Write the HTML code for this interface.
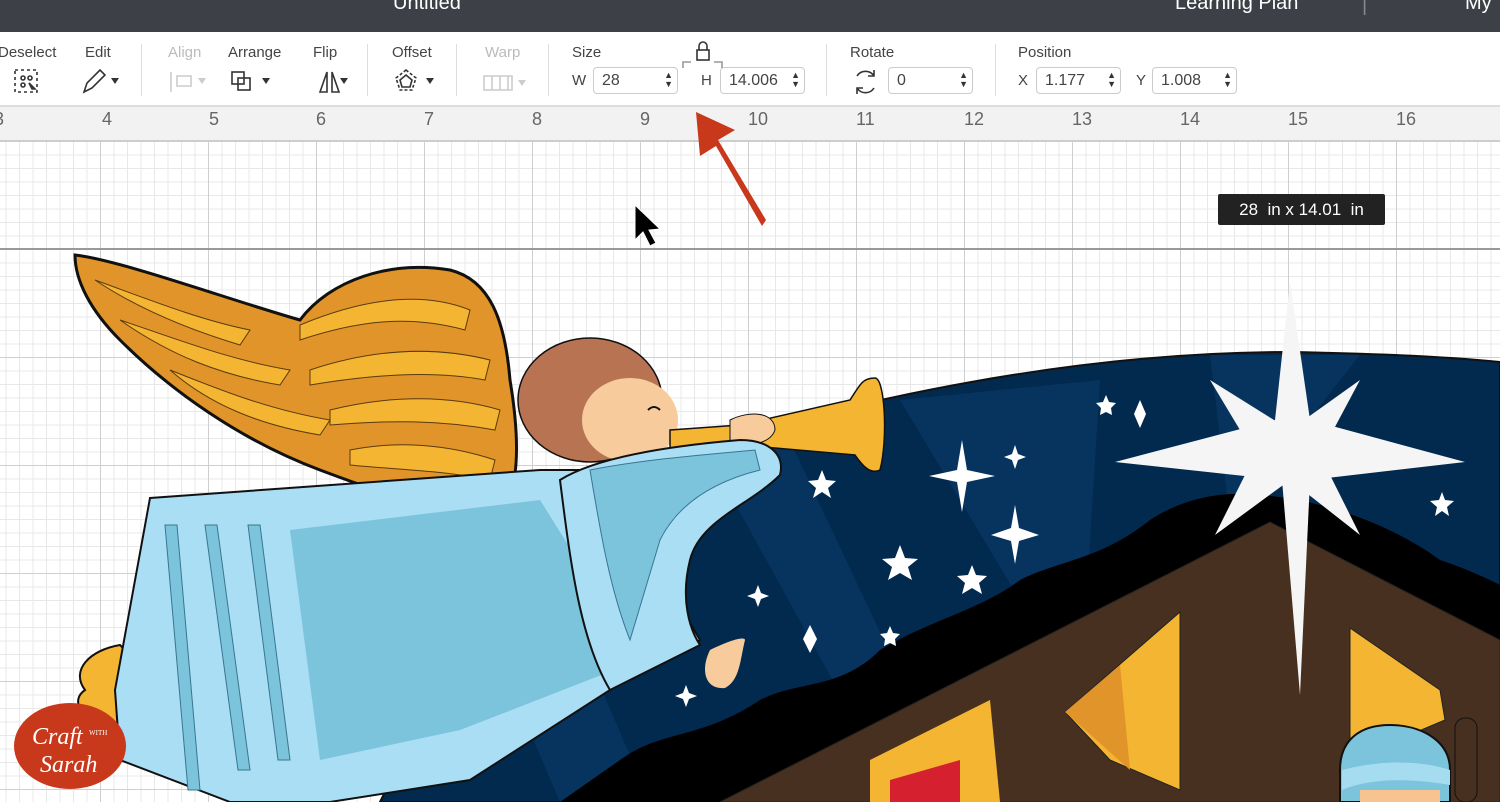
<!DOCTYPE html>
<html><head><meta charset="utf-8"><style>
*{margin:0;padding:0;box-sizing:border-box}
body{width:1500px;height:802px;overflow:hidden;font-family:"Liberation Sans",sans-serif;position:relative;background:#fff}
#top{position:absolute;left:0;top:0;width:1500px;height:32px;background:#3d4047;color:#fff;font-size:20px}
#tb{position:absolute;left:0;top:32px;width:1500px;height:75px;background:#fff;border-bottom:2px solid #ddd;color:#444;font-size:15px}
.l{position:absolute;top:12px}
.g{color:#bbb}
.sep{position:absolute;top:12px;width:1px;height:52px;background:#ddd}
.in{position:absolute;top:35px;height:27px;border:1px solid #ccc;border-radius:4px;font-size:16px;padding:4px 8px;background:#fff}
.sp{position:absolute;right:4px;top:3px;font-size:9px;line-height:9px;color:#333}
#ruler{position:absolute;left:0;top:107px;width:1500px;height:34px;background:#f2f2f2;border-bottom:1px solid #ccc}
#ruler span{position:absolute;top:2px;font-size:18px;color:#666}
#grid{position:absolute;left:0;top:141px;width:1500px;height:661px;
background-image:linear-gradient(90deg,#cfcfcf 1px,transparent 1px),linear-gradient(#cfcfcf 1px,transparent 1px),linear-gradient(90deg,#e8e8e8 1px,transparent 1px),linear-gradient(#e8e8e8 1px,transparent 1px);
background-size:108px 108px,108px 108px,13.5px 13.5px,13.5px 13.5px;background-position:100px 0,0 0,100px 0,0 0}
</style></head><body>
<div id="top"><span style="position:absolute;left:393px;top:-8px">Untitled</span><span style="position:absolute;left:1175px;top:-8px">Learning Plan</span><span style="position:absolute;left:1362px;top:-6px;color:#888">|</span><span style="position:absolute;left:1465px;top:-8px">My</span></div>
<div id="tb">
<span class="l" style="left:-2px">Deselect</span><span class="l" style="left:85px">Edit</span>
<div class="sep" style="left:141px"></div>
<span class="l g" style="left:168px">Align</span><span class="l" style="left:228px">Arrange</span><span class="l" style="left:313px">Flip</span>
<div class="sep" style="left:367px"></div>
<span class="l" style="left:392px">Offset</span>
<div class="sep" style="left:456px"></div>
<span class="l g" style="left:485px">Warp</span>
<div class="sep" style="left:548px"></div>
<span class="l" style="left:572px">Size</span>
<span class="l" style="left:572px;top:40px">W</span><div class="in" style="left:593px;width:85px">28<span class="sp">▲<br>▼</span></div>
<span class="l" style="left:701px;top:40px">H</span><div class="in" style="left:720px;width:85px">14.006<span class="sp">▲<br>▼</span></div>
<div class="sep" style="left:826px"></div>
<span class="l" style="left:850px">Rotate</span><div class="in" style="left:888px;width:85px">0<span class="sp">▲<br>▼</span></div>
<div class="sep" style="left:995px"></div>
<span class="l" style="left:1018px">Position</span>
<span class="l" style="left:1018px;top:40px">X</span><div class="in" style="left:1036px;width:85px">1.177<span class="sp">▲<br>▼</span></div>
<span class="l" style="left:1136px;top:40px">Y</span><div class="in" style="left:1152px;width:85px">1.008<span class="sp">▲<br>▼</span></div>
<svg style="position:absolute;left:0;top:0" width="900" height="75" fill="none" stroke="#333" stroke-width="1.6">
<rect x="15" y="38" width="22" height="22" stroke-dasharray="3 3"/><circle cx="23" cy="46" r="2"/><circle cx="30" cy="46" r="2"/><circle cx="23" cy="53" r="2"/><path d="M29 51 l6 6 -3 0 z" fill="#333"/>
<path d="M84 60 l3-9 13-13 5 5 -13 13z"/><path d="M111 46h8l-4 6z" fill="#333" stroke="none"/>
<path d="M171 40v20M177 44h14v10h-14z" stroke="#ccc"/><path d="M198 46h8l-4 6z" fill="#ccc" stroke="none"/>
<rect x="232" y="40" width="12" height="12"/><rect x="238" y="46" width="12" height="12"/><path d="M262 46h8l-4 6z" fill="#333" stroke="none"/>
<path d="M320 60l7-20v20zM332 60v-20l7 20z"/><path d="M340 46h8l-4 6z" fill="#333" stroke="none"/>
<path d="M406 38l10 8-4 12h-12l-4-12z" stroke-dasharray="3 2"/><path d="M406 43l6 5-2 7h-8l-2-7z"/><path d="M426 46h8l-4 6z" fill="#333" stroke="none"/>
<path d="M484 44h28v14h-28zM492 44v14M500 44v14M508 44v14" stroke="#ccc"/><path d="M518 48h8l-4 6z" fill="#ccc" stroke="none"/>
<rect x="697" y="18" width="12" height="10"/><path d="M699 18v-4a4 4 0 0 1 8 0v4"/><path d="M683 36v-6h8M714 30h8v6" stroke="#999"/>
<path d="M857 44a10 10 0 0 1 17 0M874 56a10 10 0 0 1-17 0M874 38v6h-6M857 62v-6h6"/>
</svg>
</div>
<div id="ruler">
<span style="left:-6px">3</span><span style="left:102px">4</span><span style="left:209px">5</span><span style="left:316px">6</span><span style="left:424px">7</span><span style="left:532px">8</span><span style="left:640px">9</span><span style="left:748px">10</span><span style="left:856px">11</span><span style="left:964px">12</span><span style="left:1072px">13</span><span style="left:1180px">14</span><span style="left:1288px">15</span><span style="left:1396px">16</span>
</div>
<div id="grid"></div>
<div style="position:absolute;left:0;top:248px;width:1500px;height:2px;background:#999"></div>
<svg style="position:absolute;left:0;top:0" width="1500" height="802">
<path d="M380 802 C460 640 640 460 850 407 C1000 372 1150 352 1290 352 C1400 354 1460 358 1500 362 L1500 802Z" fill="#022a4f" stroke="#111" stroke-width="2"/>
<path d="M440 520 L560 802 H650 L520 500ZM700 440 L900 802 H960 L780 420ZM900 400 L1080 700 L1100 380Z M1210 355 L1230 520 L1360 355Z" fill="#06345f"/>
<path d="M560 802 L620 760 C660 730 700 740 760 700 C800 680 840 690 880 650 C930 620 980 610 1020 580 C1060 560 1100 560 1150 520 C1180 500 1220 490 1260 495 C1330 500 1400 530 1440 560 C1470 570 1490 580 1500 585 V802Z" fill="#000"/>
<path d="M720 802 L1270 522 L1500 640 V802Z" fill="#47301f" stroke="#222"/>
<path d="M1065 712 L1180 612 V790 L1110 760Z" fill="#f4b532" stroke="#222"/>
<path d="M1065 712 L1120 665 L1130 770 Z" fill="#e09429"/>
<path d="M1350 628 L1440 690 L1445 720 L1350 760Z" fill="#f4b532" stroke="#222"/>
<path d="M870 760 L990 700 L1000 802 H870Z" fill="#f4b532"/>
<path d="M890 780 L960 760 L960 802 H890Z" fill="#d4202f"/>
<rect x="1455" y="718" width="22" height="84" rx="10" fill="#47301f" stroke="#111"/>
<path d="M1340 802 V770 C1340 740 1360 725 1390 725 C1420 725 1450 740 1450 770 V802Z" fill="#7cc3dc" stroke="#111" stroke-width="2"/>
<path d="M1342 770 C1380 760 1420 760 1450 770 V785 C1410 778 1370 778 1342 790Z" fill="#a6dcf0"/>
<path d="M1360 802 V790 H1440 V802Z" fill="#f7c491"/>
<path d="M1290 282 L1310 420 L1465 462 L1310 480 L1300 695 L1282 480 L1115 462 L1275 420Z" fill="#f5f5f5"/>
<path d="M1210 380 L1290 430 L1360 380 L1320 455 L1360 535 L1290 480 L1215 535 L1255 455Z" fill="#f5f5f5"/>
<g fill="#fff">
<path d="M962 440 l5 30 28 6 -28 6 -5 30 -5-30 -28-6 28-6z"/>
<path d="M1015 505 l4 23 20 7 -20 6 -4 23 -4-23 -20-6 20-7z"/>
<path d="M1015 445 l3 9 8 3 -8 3 -3 9 -3-9 -8-3 8-3z"/>
<path d="M1140 400 l6 14 -6 14 -6-14z"/><path d="M1106 395 l3 7 7 1 -5 5 1 7 -6-3 -6 3 1-7 -5-5 7-1z"/>
<path d="M822 470 l4 10 10 1 -8 7 3 10 -9-6 -9 6 3-10 -8-7 10-1z"/>
<path d="M900 545 l5 13 13 1 -10 8 4 13 -12-7 -12 7 4-13 -10-8 13-1z"/>
<path d="M972 565 l4 10 11 1 -8 7 3 11 -10-6 -10 6 3-11 -8-7 11-1z"/>
<path d="M810 625 l7 14 -7 14 -7-14z"/><path d="M758 585 l3 8 8 3 -8 3 -3 8 -3-8 -8-3 8-3z"/>
<path d="M890 626 l3 7 7 1 -5 5 1 7 -6-3 -6 3 1-7 -5-5 7-1z"/>
<path d="M686 685 l3 8 8 3 -8 3 -3 8 -3-8 -8-3 8-3z"/><path d="M574 670 l3 7 8 1 -6 5 2 8 -7-4 -7 4 2-8 -6-5 8-1z"/>
<path d="M1442 492 l3 8 9 1 -7 6 2 9 -7-5 -7 5 2-9 -7-6 9-1z"/>
</g>
<path d="M75 255 C120 260 230 300 300 320 C330 280 390 260 450 270 C490 280 505 320 510 380 C520 440 520 490 500 515 C460 520 400 500 320 470 C240 440 170 390 120 340 C90 310 75 280 75 255Z" fill="#e09429" stroke="#111" stroke-width="3"/>
<g fill="#f4b532" stroke="#5a3a10" stroke-width="1">
<path d="M95 280 C150 300 200 320 250 330 L240 345 C190 330 140 310 95 280Z"/>
<path d="M120 320 C180 340 230 360 290 370 L280 385 C220 375 170 355 120 320Z"/>
<path d="M300 325 C360 300 420 290 470 310 L465 330 C410 315 360 320 300 340Z"/>
<path d="M310 370 C370 350 430 345 490 360 L485 380 C430 370 370 375 310 385Z"/>
<path d="M330 410 C390 395 450 395 500 410 L495 430 C440 420 390 420 330 425Z"/>
<path d="M350 450 C400 440 450 445 495 460 L490 480 C440 470 400 470 350 465Z"/>
<path d="M170 370 C220 390 270 410 330 420 L320 435 C260 425 210 405 170 370Z"/>
</g>
<path d="M120 645 C90 650 70 670 85 690 C70 700 80 720 110 725 L130 720 L125 650Z" fill="#f4b532" stroke="#111" stroke-width="2"/>
<path d="M150 498 L540 470 L600 470 L700 640 L610 690 L470 780 L330 802 L230 802 L120 760 L115 690 Z" fill="#a9def4" stroke="#111" stroke-width="2"/>
<path d="M290 530 L540 500 L640 660 L460 730 L320 760 Z" fill="#7cc3dc"/>
<g fill="#7cc3dc" stroke="#3a7590" stroke-width="1">
<path d="M165 525 h12 L200 790 h-12Z"/><path d="M205 525 h12 L250 770 h-12Z"/><path d="M248 525 h12 L290 760 h-12Z"/>
</g>
<ellipse cx="590" cy="400" rx="72" ry="62" fill="#b87353" stroke="#111" stroke-width="1.5"/>
<ellipse cx="630" cy="420" rx="48" ry="42" fill="#f8cb9d"/>
<path d="M648 410 q6-6 12 0" stroke="#111" stroke-width="2" fill="none"/>
<path d="M670 430 L740 425 L850 400 C860 385 862 378 875 378 C885 378 888 440 880 470 C870 475 862 465 855 455 L740 445 L670 450Z" fill="#f4b532" stroke="#111" stroke-width="1.5"/>
<path d="M730 420 C750 410 775 412 775 430 C770 445 745 448 730 440Z" fill="#f8cb9d" stroke="#111"/>
<path d="M710 650 C730 640 745 636 745 640 C740 660 740 680 725 688 C705 690 700 670 710 650Z" fill="#f8cb9d"/>
<path d="M560 480 C600 455 680 445 740 440 C770 440 785 455 780 475 C750 505 700 520 690 560 C680 600 690 630 700 645 L610 690 C580 640 570 560 560 480Z" fill="#a9def4" stroke="#111" stroke-width="2"/>
<path d="M590 470 C640 460 700 455 755 450 L760 470 C720 480 680 500 660 540 L630 640 C610 590 600 530 590 470Z" fill="#7cc3dc" stroke="#3a7590"/>
<path d="M766 220 L718 140 L735 130 L696 112 L700 156 L716 146 L762 226Z" fill="#c8381b"/>
<path d="M635 205 V240 L643 232 L650 246 L656 243 L649 230 L660 229Z" fill="#000" stroke="#fff"/>
<ellipse cx="70" cy="746" rx="56" ry="43" fill="#c8381b"/>
<text x="32" y="744" fill="#fff" font-family="Liberation Serif" font-style="italic" font-size="24">Craft</text>
<text x="89" y="735" fill="#fff" font-family="Liberation Serif" font-size="7">WITH</text>
<text x="40" y="772" fill="#fff" font-family="Liberation Serif" font-style="italic" font-size="24">Sarah</text>
</svg>
<div style="position:absolute;left:1218px;top:194px;width:167px;height:31px;background:#222;color:#fff;font-size:17px;line-height:31px;text-align:center;border-radius:2px;white-space:pre">28  in x 14.01  in</div>
</body></html>
